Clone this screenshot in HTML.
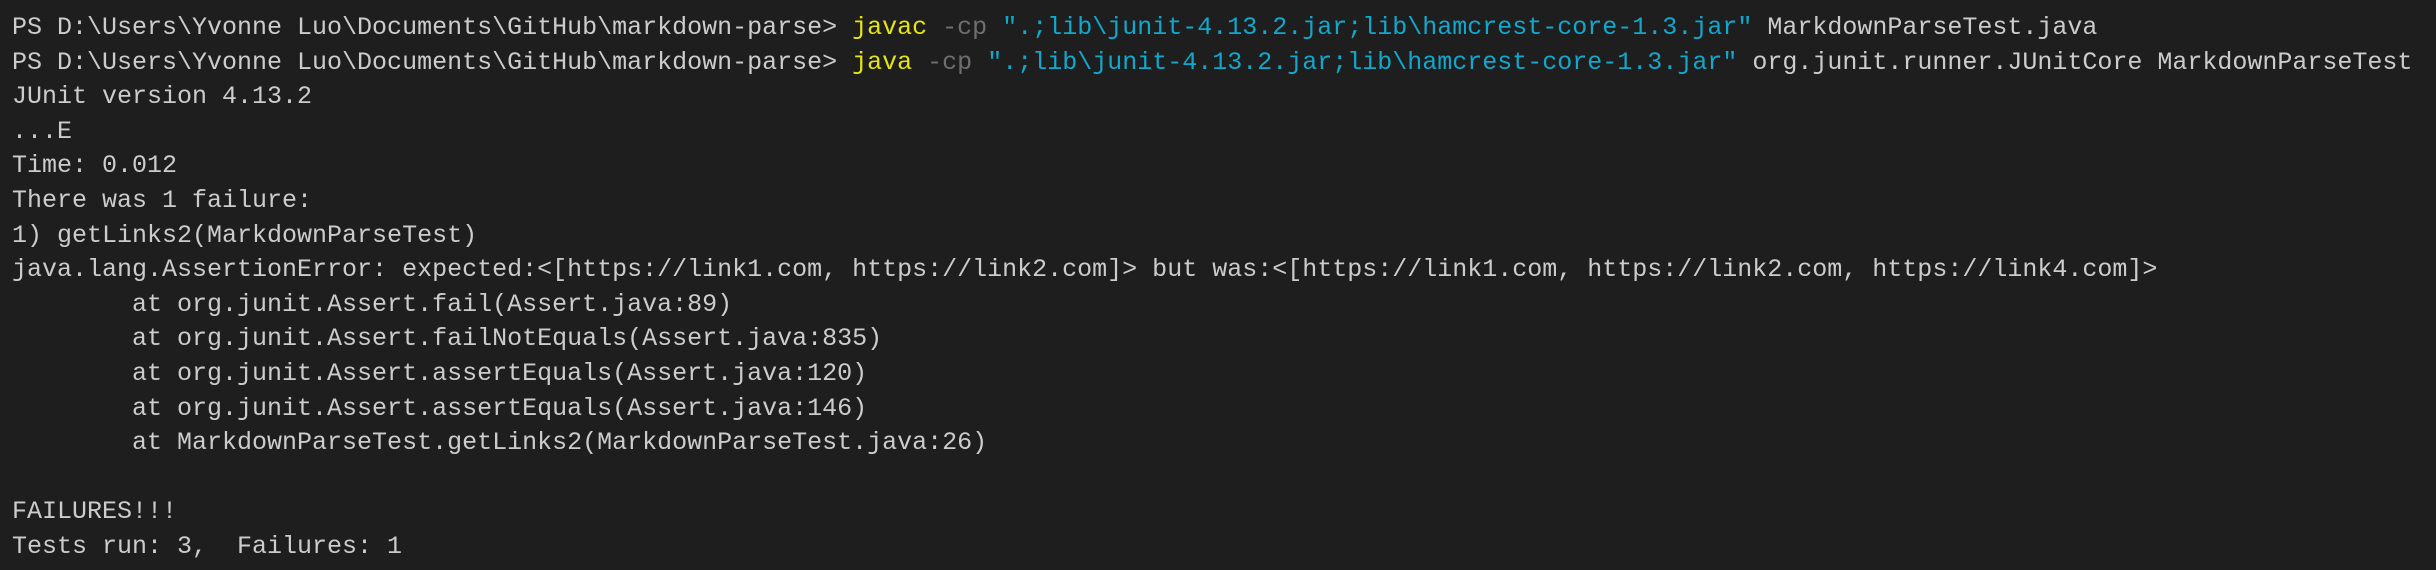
<!DOCTYPE html>
<html><head><meta charset="utf-8"><style>
html,body{margin:0;padding:0;background:#1e1e1e;width:2436px;height:570px;overflow:hidden}
pre{margin:0;padding:11px 0 0 12px;font-family:"Liberation Mono",monospace;font-size:25px;line-height:34.6px;color:#cccccc;white-space:pre}
.y{color:#e5e510}.g{color:#6e6e6e}.c{color:#11a8cd}
</style></head><body><pre>PS D:\Users\Yvonne Luo\Documents\GitHub\markdown-parse&gt; <span class="y">javac</span> <span class="g">-cp</span> <span class="c">".;lib\junit-4.13.2.jar;lib\hamcrest-core-1.3.jar"</span> MarkdownParseTest.java
PS D:\Users\Yvonne Luo\Documents\GitHub\markdown-parse&gt; <span class="y">java</span> <span class="g">-cp</span> <span class="c">".;lib\junit-4.13.2.jar;lib\hamcrest-core-1.3.jar"</span> org.junit.runner.JUnitCore MarkdownParseTest
JUnit version 4.13.2
...E
Time: 0.012
There was 1 failure:
1) getLinks2(MarkdownParseTest)
java.lang.AssertionError: expected:&lt;[https://link1.com, https://link2.com]&gt; but was:&lt;[https://link1.com, https://link2.com, https://link4.com]&gt;
        at org.junit.Assert.fail(Assert.java:89)
        at org.junit.Assert.failNotEquals(Assert.java:835)
        at org.junit.Assert.assertEquals(Assert.java:120)
        at org.junit.Assert.assertEquals(Assert.java:146)
        at MarkdownParseTest.getLinks2(MarkdownParseTest.java:26)

FAILURES!!!
Tests run: 3,  Failures: 1
</pre></body></html>
